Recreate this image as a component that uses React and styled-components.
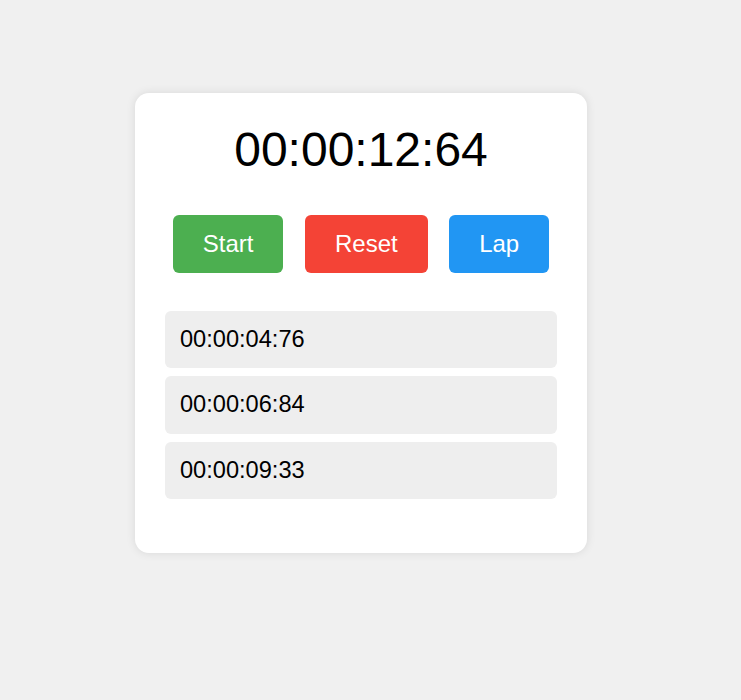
import React from "react";
import styled, { createGlobalStyle } from "styled-components";

const Global = createGlobalStyle`
  html, body { margin: 0; padding: 0; background: #f0f0f0; }
  body { font-family: "Liberation Sans", Arial, sans-serif; }
`;

const Page = styled.div`
  padding: 93px 0 0 135px;
  min-height: 700px;
  box-sizing: border-box;
`;

const Card = styled.div`
  width: 392px;
  background: #fff;
  border-radius: 14px;
  box-shadow: 0 0 10px rgba(0, 0, 0, 0.1);
  padding: 29px 30px 54px;
`;

const Display = styled.div`
  font-size: 48px;
  color: #000;
  text-align: center;
  line-height: 55px;
`;

const Controls = styled.div`
  display: flex;
  justify-content: center;
  gap: 21.5px;
  margin-top: 38px;
`;

const Button = styled.button`
  font-family: "Liberation Sans", Arial, sans-serif;
  font-size: 24px;
  line-height: 27.6px;
  padding: 15px 30px;
  border: none;
  border-radius: 6px;
  color: #fff;
  background: ${(p) => p.$bg};
  cursor: pointer;
`;

const Laps = styled.ul`
  list-style: none;
  margin: 38px 0 0;
  padding: 0;
  display: flex;
  flex-direction: column;
  gap: 8px;
`;

const Lap = styled.li`
  background: #eee;
  border-radius: 6px;
  padding: 15px;
  font-size: 23.6px;
  line-height: 27.6px;
  color: #000;
`;

export default function App() {
  const laps = ["00:00:04:76", "00:00:06:84", "00:00:09:33"];
  return (
    <>
      <Global />
      <Page>
        <Card>
          <Display>00:00:12:64</Display>
          <Controls>
            <Button $bg="#4caf50">Start</Button>
            <Button $bg="#f44336">Reset</Button>
            <Button $bg="#2196f3">Lap</Button>
          </Controls>
          <Laps>
            {laps.map((l) => (
              <Lap key={l}>{l}</Lap>
            ))}
          </Laps>
        </Card>
      </Page>
    </>
  );
}
